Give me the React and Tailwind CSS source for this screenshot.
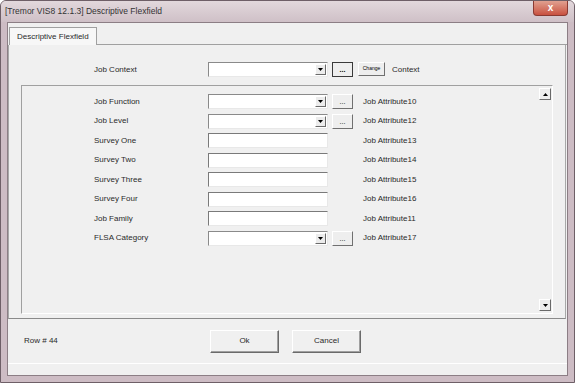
const FONT = { fontFamily: '"Liberation Sans", Arial, sans-serif' };

const rows = [
  { label: "Job Function", kind: "combo", attr: "Job Attribute10" },
  { label: "Job Level", kind: "combo", attr: "Job Attribute12" },
  { label: "Survey One", kind: "text", attr: "Job Attribute13" },
  { label: "Survey Two", kind: "text", attr: "Job Attribute14" },
  { label: "Survey Three", kind: "text", attr: "Job Attribute15" },
  { label: "Survey Four", kind: "text", attr: "Job Attribute16" },
  { label: "Job Family", kind: "text", attr: "Job Attribute11" },
  { label: "FLSA Category", kind: "combo", attr: "Job Attribute17" },
];

function Arrow({ up }) {
  return (
    <svg width="5" height="3" viewBox="0 0 5 3">
      <path d={up ? "M0 3 L2.5 0 L5 3 Z" : "M0 0 L5 0 L2.5 3 Z"} fill="#000" />
    </svg>
  );
}

function Combo() {
  return (
    <div className="flex h-[15px] w-[120px] items-stretch border border-t-[#8a8a8a] border-l-[#8a8a8a] border-r-[#e8e8e8] border-b-[#e8e8e8] bg-white">
      <div className="flex-1" />
      <div className="my-[1px] mr-[1px] flex w-[11px] items-center justify-center border border-t-white border-l-white border-r-[#6a6a6a] border-b-[#6a6a6a] bg-[#ececec]">
        <Arrow />
      </div>
    </div>
  );
}

function TextBox() {
  return (
    <div className="h-[15px] w-[120px] border border-t-[#7a7a7a] border-l-[#7a7a7a] border-r-[#e8e8e8] border-b-[#e8e8e8] bg-white" />
  );
}

function DotsButton({ dark }) {
  return (
    <div
      className={`flex h-[15px] w-[21px] items-center justify-center bg-[#eeeeee] text-[7px] leading-none ${
        dark
          ? "border border-[#3a3a3a] font-bold"
          : "border border-t-white border-l-white border-r-[#707070] border-b-[#707070]"
      }`}
    >
      ...
    </div>
  );
}

function FieldRow({ row }) {
  return (
    <div className="flex h-[19.5px] items-center">
      <div className="w-[114px] text-[8px] text-[#2a2a2a]">{row.label}</div>
      {row.kind === "combo" ? <Combo /> : <TextBox />}
      <div className="ml-[4px] w-[21px]">{row.kind === "combo" ? <DotsButton /> : null}</div>
      <div className="ml-[10px] text-[8px] text-[#2a2a2a]">{row.attr}</div>
    </div>
  );
}

function WinButton({ children }) {
  return (
    <div className="flex h-[23px] w-[69px] items-center justify-center border border-t-white border-l-white border-r-[#6a6a6a] border-b-[#6a6a6a] bg-[#f0f0f0] text-[8px] text-[#2a2a2a] shadow-[inset_-1px_-1px_0_#a0a0a0]">
      {children}
    </div>
  );
}

export default function App() {
  return (
    <div style={FONT} className="flex h-[383px] w-[575px] flex-col overflow-hidden rounded-t-[6px] border border-[#6e5f67] bg-[#cdbcc4]">
      <div className="flex h-[21px] items-start bg-gradient-to-b from-[#e2d8dc] to-[#cfc0c7]">
        <div className="ml-[4px] mt-[4px] text-[8.5px] text-[#333]">[Tremor VIS8 12.1.3] Descriptive Flexfield</div>
        <div className="ml-auto mr-[6px] flex h-[15px] w-[35px] items-center justify-center rounded-b-[4px] border border-t-0 border-[#8a3a32] bg-gradient-to-b from-[#e0a090] to-[#c85040]">
          <span className="text-[10px] font-bold leading-none text-white">x</span>
        </div>
      </div>

      <div className="mx-[6px] mb-[6px] flex flex-1 flex-col border border-[#8c7e85] bg-[#f0f0f0]">
        <div className="flex h-[22px] items-end pl-[1px]">
          <div className="flex h-[18px] items-center border border-b-0 border-[#a0a0a0] bg-[#f7f7f7] px-[7px] text-[8px] text-[#2a2a2a]">
            Descriptive Flexfield
          </div>
          <div className="flex-1 border-b border-[#a0a0a0]" />
        </div>

        <div className="mr-[1px] flex h-[274px] flex-col border border-t-0 border-[#a8a8a8] border-b-[#8a8a8a] bg-[#f0f0f0]">
          <div className="flex h-[40px] items-start pl-[85px] pt-[17px]">
            <div className="flex h-[15px] w-[114px] items-center text-[8px] text-[#2a2a2a]">Job Context</div>
            <Combo />
            <div className="ml-[4px]">
              <DotsButton dark />
            </div>
            <div className="ml-[5px] flex h-[14px] w-[27px] items-center justify-center border border-t-white border-l-white border-r-[#707070] border-b-[#707070] bg-[#eeeeee] text-[5px]">
              Change
            </div>
            <div className="ml-[7px] flex h-[15px] items-center text-[8px] text-[#2a2a2a]">Context</div>
          </div>

          <div className="mx-[12px] mb-[4px] flex flex-1 border border-t-[#a0a0a0] border-l-[#a0a0a0] border-r-white border-b-white">
            <div className="flex flex-1 flex-col pl-[72px] pt-[6px]">
              {rows.map((row) => (
                <FieldRow key={row.label} row={row} />
              ))}
            </div>
            <div className="flex w-[13px] flex-col justify-between py-[2px] pr-[1px]">
              <div className="flex h-[12px] w-[12px] items-center justify-center border border-t-white border-l-white border-r-[#6a6a6a] border-b-[#6a6a6a] bg-[#ececec]">
                <Arrow up />
              </div>
              <div className="flex h-[12px] w-[12px] items-center justify-center border border-t-white border-l-white border-r-[#6a6a6a] border-b-[#6a6a6a] bg-[#ececec]">
                <Arrow />
              </div>
            </div>
          </div>
        </div>

        <div className="flex h-[45px] items-center border-b border-white pl-[16px]">
          <div className="w-[186px] text-[8px] text-[#2a2a2a]">Row # 44</div>
          <WinButton>Ok</WinButton>
          <div className="ml-[13px]">
            <WinButton>Cancel</WinButton>
          </div>
        </div>
      </div>
    </div>
  );
}
